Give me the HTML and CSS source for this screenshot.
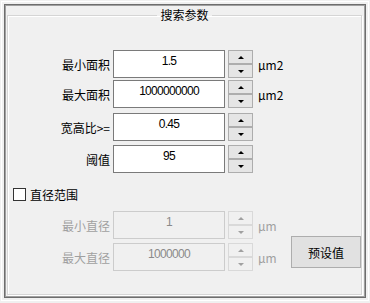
FILE: index.html
```html
<!DOCTYPE html>
<html lang="zh-CN">
<head>
    <meta charset="UTF-8">
    <title>搜索参数</title>
    <link rel="stylesheet" href="styles.css">
</head>
<body>
    <div class="frame">
        <div class="panel">
            <fieldset class="group">
                <legend>搜索参数</legend>

                <div class="row row1">
                    <span class="label">最小面积</span>
                    <div class="box">1.5</div>
                    <div class="spin"><span class="up"></span><span class="down"></span></div>
                    <span class="unit">μm2</span>
                </div>
                <div class="row row2">
                    <span class="label">最大面积</span>
                    <div class="box">1000000000</div>
                    <div class="spin"><span class="up"></span><span class="down"></span></div>
                    <span class="unit">μm2</span>
                </div>
                <div class="row row3">
                    <span class="label">宽高比&gt;=</span>
                    <div class="box">0.45</div>
                    <div class="spin"><span class="up"></span><span class="down"></span></div>
                </div>
                <div class="row row4">
                    <span class="label">阈值</span>
                    <div class="box">95</div>
                    <div class="spin"><span class="up"></span><span class="down"></span></div>
                </div>

                <label class="check"><span class="checkbox"></span>直径范围</label>

                <div class="range">
                    <div class="range-rows">
                        <div class="row disabled">
                            <span class="label">最小直径</span>
                            <div class="box">1</div>
                            <div class="spin"><span class="up"></span><span class="down"></span></div>
                            <span class="unit">μm</span>
                        </div>
                        <div class="row disabled row-next">
                            <span class="label">最大直径</span>
                            <div class="box">1000000</div>
                            <div class="spin"><span class="up"></span><span class="down"></span></div>
                            <span class="unit">μm</span>
                        </div>
                    </div>
                    <button class="preset">预设值</button>
                </div>
            </fieldset>
        </div>
    </div>
</body>
</html>
```

FILE: styles.css
```css
body {
    margin: 0;
    background-color: #f0f0f0;
    font-family: "Noto Sans CJK SC", sans-serif;
    font-size: 12px;
    color: #000;
}
.frame {
    margin: 1px 0 0 1px;
    width: 368px;
    height: 300px;
    box-sizing: border-box;
    border: 1px solid #fff;
    padding: 2px;
}
.panel {
    height: 100%;
    box-sizing: border-box;
    border: 1px solid #6d6d6d;
    box-shadow: inset 0 0 0 1px #a0a0a0;
}
.group {
    margin: 3px 0 0 2px;
    padding: 0;
    width: 355px;
    height: 287px;
    box-sizing: border-box;
    border: 1px solid #d5d5d5;
    box-shadow: 1px 1px 0 #fff, inset 1px 1px 0 #fff;
    min-inline-size: 0;
}
.group legend {
    margin: 0 auto;
    padding: 0 3px;
    line-height: 14px;
}
.row {
    display: flex;
    align-items: center;
    gap: 3px;
    height: 28px;
}
.row1 { margin-top: 28px; }
.row2 { margin-top: 2px; }
.row3 { margin-top: 5px; }
.row4 { margin-top: 4px; }
.row-next { margin-top: 4px; }
.label {
    width: 102px;
    text-align: right;
    white-space: nowrap;
}
.box {
    width: 112px;
    height: 28px;
    box-sizing: border-box;
    border: 1px solid #7a7a7a;
    background-color: #fff;
    text-align: center;
    font-family: "Liberation Sans", sans-serif;
    letter-spacing: -0.7px;
    line-height: 16px;
    padding-top: 2px;
}
.spin {
    display: flex;
    flex-direction: column;
    width: 25px;
}
.spin span {
    position: relative;
    height: 14px;
    box-sizing: border-box;
    border: 1px solid #adadad;
    background-color: #e5e5e5;
    display: flex;
    align-items: center;
    justify-content: center;
}
.spin span::after {
    content: "";
    border-left: 3px solid transparent;
    border-right: 3px solid transparent;
}
.spin .up::after {
    border-bottom: 3px solid #000;
}
.spin .down::after {
    border-top: 3px solid #000;
}
.unit {
    width: 32px;
    padding-left: 2px;
    box-sizing: border-box;
    white-space: nowrap;
}
.check {
    display: flex;
    align-items: center;
    gap: 4px;
    margin: 15px 0 0 5px;
    height: 13px;
}
.checkbox {
    width: 13px;
    height: 13px;
    box-sizing: border-box;
    border: 1px solid #333;
    background-color: #fff;
}
.range {
    display: flex;
    gap: 3px;
    margin-top: 10px;
}
.disabled {
    color: #a0a0a0;
}
.disabled .box {
    border-color: #cccccc;
    background-color: #f0f0f0;
    color: #8a8a8a;
}
.disabled .spin span {
    border-color: #d9d9d9;
    background-color: #f0f0f0;
}
.disabled .spin .up::after {
    border-bottom-color: #a0a0a0;
}
.disabled .spin .down::after {
    border-top-color: #a0a0a0;
}
.preset {
    margin-top: 25px;
    width: 70px;
    height: 32px;
    border: 1px solid #adadad;
    background-color: #e1e1e1;
    font-family: "Noto Sans CJK SC", sans-serif;
    font-size: 12px;
    color: #000;
    padding: 0;
}
```
